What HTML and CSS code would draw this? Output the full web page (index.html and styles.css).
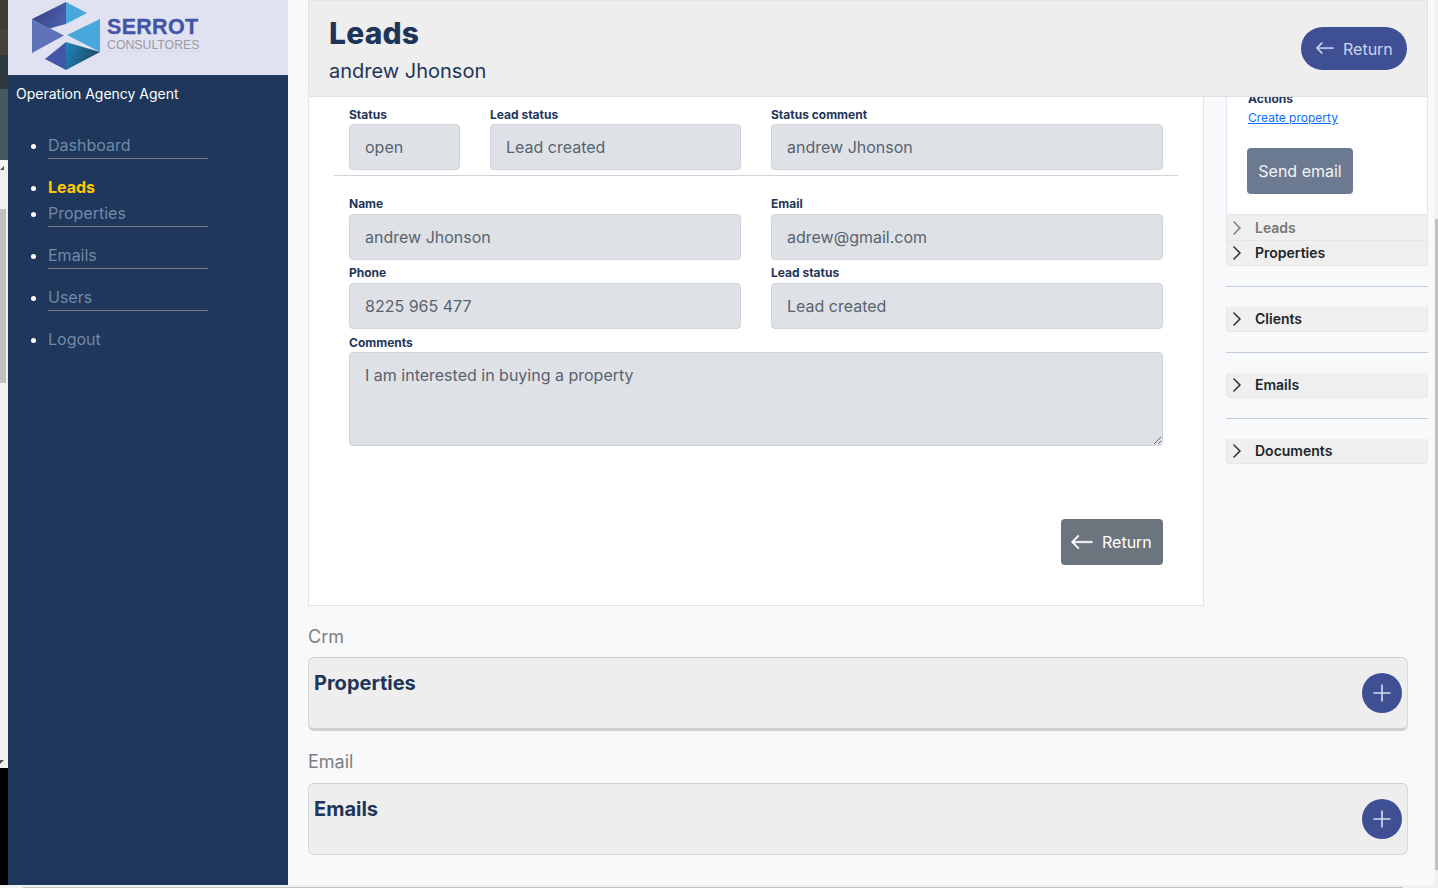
FILE: index.html
```html
<!DOCTYPE html>
<html lang="en">
<head>
<meta charset="utf-8">
<title>Leads</title>
<link rel="stylesheet" href="styles.css">
</head>
<body>
<svg class="defs" width="0" height="0" aria-hidden="true">
  <defs>
    <linearGradient id="gTop" x1="0" y1="0" x2="1" y2="0.4"><stop offset="0" stop-color="#2f3f7c"/><stop offset="1" stop-color="#4a5cab"/></linearGradient>
    <linearGradient id="gBot" x1="0" y1="0" x2="1" y2="0.4"><stop offset="0" stop-color="#1f87bd"/><stop offset="1" stop-color="#1d4a66"/></linearGradient>
    <symbol id="arrow" viewBox="0 0 16 16"><path fill="currentColor" stroke="currentColor" stroke-width=".35" fill-rule="evenodd" d="M15 8a.5.5 0 0 0-.5-.5H2.707l3.147-3.146a.5.5 0 1 0-.708-.708l-4 4a.5.5 0 0 0 0 .708l4 4a.5.5 0 0 0 .708-.708L2.707 8.5H14.5A.5.5 0 0 0 15 8z"/></symbol>
    <symbol id="chev" viewBox="0 0 16 16"><path fill="currentColor" stroke="currentColor" stroke-width=".6" fill-rule="evenodd" d="M4.646 1.646a.5.5 0 0 1 .708 0l6 6a.5.5 0 0 1 0 .708l-6 6a.5.5 0 0 1-.708-.708L10.293 8 4.646 2.354a.5.5 0 0 1 0-.708z"/></symbol>
    <symbol id="plus" viewBox="0 0 18 18"><path stroke="currentColor" stroke-width="1.6" stroke-linecap="round" d="M9 1v16M1 9h16"/></symbol>
  </defs>
</svg>
<div class="app">
  <div class="top">
    <div class="strip">
      <div class="s1"></div><div class="s2"></div><div class="s3"></div><div class="s4"></div>
      <div class="s5"><span class="tri-up"></span><span class="thumb"></span><span class="tri-down"></span></div>
      <div class="s6"></div>
    </div>
    <aside class="sidebar">
      <div class="brand">
        <svg class="mark" viewBox="0 0 72 70" width="72" height="70">
          <polygon points="35,0 35,22 17,27 1,17" fill="url(#gTop)"/>
          <polygon points="1,17 33,33.5 1,51" fill="#5f73b8"/>
          <polygon points="35,0 56,11 35,22" fill="#48a8dd"/>
          <polygon points="69,17 69,50 36,33" fill="#48a8dd"/>
          <polygon points="35,40 69,50 35,68" fill="url(#gBot)"/>
          <polygon points="35,40 35,68 14,57" fill="#4456a8"/>
        </svg>
        <div class="wordmark">
          <div class="wm1">SERROT</div>
          <div class="wm2">CONSULTORES</div>
        </div>
      </div>
      <div class="role">Operation Agency Agent</div>
      <ul class="nav">
        <li class="nav-item rule"><a>Dashboard</a></li>
        <li class="nav-item active"><a>Leads</a></li>
        <li class="nav-item rule"><a>Properties</a></li>
        <li class="nav-item rule"><a>Emails</a></li>
        <li class="nav-item rule"><a>Users</a></li>
        <li class="nav-item"><a>Logout</a></li>
      </ul>
    </aside>
    <main class="main">
      <header class="head">
        <div>
          <h1>Leads</h1>
          <p>andrew Jhonson</p>
        </div>
        <button class="pill"><svg width="20" height="20"><use href="#arrow"/></svg><span class="pill-text">Return</span></button>
      </header>
      <div class="columns">
        <section class="card">
          <div class="grid g3">
            <div><div class="lab">Status</div><div class="field">open</div></div>
            <div><div class="lab">Lead status</div><div class="field">Lead created</div></div>
            <div><div class="lab">Status comment</div><div class="field">andrew Jhonson</div></div>
          </div>
          <hr class="sep">
          <div class="grid g2 second">
            <div><div class="lab">Name</div><div class="field">andrew Jhonson</div></div>
            <div><div class="lab">Email</div><div class="field">adrew@gmail.com</div></div>
            <div><div class="lab">Phone</div><div class="field">8225 965 477</div></div>
            <div><div class="lab">Lead status</div><div class="field">Lead created</div></div>
          </div>
          <div class="comments">
            <div class="lab">Comments</div>
            <textarea class="area" readonly>I am interested in buying a property</textarea>
          </div>
          <div class="foot"><button class="back"><svg width="24" height="24"><use href="#arrow"/></svg>Return</button></div>
        </section>
        <aside class="side">
          <div class="actions">
            <div class="act-title">Actions</div>
            <a class="act-link">Create property</a>
            <button class="send">Send email</button>
          </div>
          <div class="acc">
            <div class="acc-row muted"><svg width="16" height="16"><use href="#chev"/></svg>Leads</div>
            <div class="acc-row"><svg width="16" height="16"><use href="#chev"/></svg>Properties</div>
          </div>
          <hr class="line">
          <div class="acc"><div class="acc-row"><svg width="16" height="16"><use href="#chev"/></svg>Clients</div></div>
          <hr class="line">
          <div class="acc"><div class="acc-row"><svg width="16" height="16"><use href="#chev"/></svg>Emails</div></div>
          <hr class="line">
          <div class="acc"><div class="acc-row"><svg width="16" height="16"><use href="#chev"/></svg>Documents</div></div>
        </aside>
      </div>
      <div class="group">Crm</div>
      <section class="panel thick">
        <h2>Properties</h2>
        <button class="add"><svg width="18" height="18"><use href="#plus"/></svg></button>
      </section>
      <div class="group second-group">Email</div>
      <section class="panel">
        <h2>Emails</h2>
        <button class="add"><svg width="18" height="18"><use href="#plus"/></svg></button>
      </section>
    </main>
    <div class="vbar"><span class="vthumb"></span></div>
  </div>
  <div class="hbar"><span class="hthumb"></span></div>
</div>
</body>
</html>
```
FILE: styles.css
```css
* { box-sizing: border-box; }
html, body { margin: 0; padding: 0; height: 100%; overflow: hidden; }
body { font-family: Inter, "Liberation Sans", sans-serif; background: #f8f9fb; color: #1e3559; }
.defs { display: block; height: 0; }
.app { width: 1438px; height: 888px; display: flex; flex-direction: column; overflow: hidden; }
.top { flex: 0 0 885px; display: flex; min-height: 0; }

.strip { flex: 0 0 8px; display: flex; flex-direction: column; }
.s1 { height: 29px; background: #3e3b37; }
.s2 { height: 26px; background: #45423d; }
.s3 { height: 34px; background: #2f3a40; }
.s4 { height: 71px; background: #48575d; }
.s5 { height: 608px; background: #f1f1f1; display: flex; flex-direction: column; }
.s6 { flex: 1; background: #000; }
.tri-up { display: block; width: 0; height: 0; margin-top: 6px; border-left: 4px solid transparent; border-right: 0; border-bottom: 4px solid #505050; }
.thumb { display: block; width: 6px; height: 174px; margin-top: 39px; background: #c1c1c1; }
.tri-down { display: block; width: 0; height: 0; margin-top: 377px; border-left: 4px solid #505050; border-bottom: 4px solid transparent; }

.sidebar { flex: 0 0 280px; background: #1e375b; display: flex; flex-direction: column; }
.brand { height: 75px; background: #e0e2f1; display: flex; padding: 2px 0 0 23px; gap: 4px; }
.mark { flex: none; }
.wordmark { padding-top: 14px; width: 98px; height: 50px; border-bottom: 1px solid #d9dbea; }
.wm1 { font: 700 21.5px/23px "Liberation Sans", sans-serif; color: #4255a6; letter-spacing: .3px; -webkit-text-stroke: .3px #4255a6; }
.wm2 { font: 400 12.3px/14px "Liberation Sans", sans-serif; color: #9b9ba6; margin-top: -1px; }
.role { font-size: 14px; line-height: 20px; color: #fff; padding: 9px 0 0 8px; }
.nav { list-style: disc; margin: 0; padding: 29px 0 0 40px; color: #fff; }
.nav-item { width: 160px; height: 26px; font-size: 16px; line-height: 24px; }
.nav-item a { display: block; height: 26px; color: #7389a8; }
.nav-item.rule { margin-bottom: 16px; }
.nav-item.rule a { border-bottom: 1px solid #7a7d80; }
.nav-item.active a { color: #ffc800; font-weight: 700; }

.main { flex: 1; min-width: 0; padding-left: 20px; background: #f8f9fb; }
.head { position: relative; z-index: 2; width: 1120px; height: 97px; padding: 0 20px 0 20px; background: #eee; border: 1px solid #dee2e6; border-top-color: #e2e4e8; border-radius: 0 0 3px 3px; display: flex; justify-content: space-between; align-items: center; }
.head h1 { margin: 0; font-size: 30px; line-height: 36px; font-weight: 800; letter-spacing: .2px; color: #1e3559; padding-top: 0; }
.head p { margin: 8px 0 0; font-size: 20px; line-height: 24px; color: #1e3559; }
.pill { width: 106px; height: 43px; margin-top: -1px; border: 0; border-radius: 22px; background: #3f4f94; color: #cbd4ee; font: 400 16px Inter, sans-serif; display: flex; align-items: center; gap: 8px; padding: 0 0 0 14px; }
.pill-text { padding-top: 2px; }

.columns { display: flex; align-items: flex-start; gap: 22px; }
.card { width: 896px; height: 509px; background: #fff; border: 1px solid #e2e4e8; border-top: 0; padding: 11px 25px 0; }
.grid { display: grid; column-gap: 30px; padding: 0 15px; }
.g3 { grid-template-columns: 111px 251px 392px; }
.g2 { grid-template-columns: 392px 392px; row-gap: 6px; }
.lab { font-size: 12px; line-height: 14px; height: 16px; font-weight: 700; color: #1e3559; }
.g2 .lab { height: 17px; }
.field { height: 46px; padding: 0 15px; background: #dee1e6; border: 1px solid #cfd4da; border-radius: 4px; font-size: 16px; line-height: 44px; color: #59636f; }
.sep { margin: 5px 0 0; border: 0; border-top: 1px solid #cfd2d8; }
.second { margin-top: 21px; }
.comments { padding: 7px 15px 0; }
.area { display: block; width: 100%; height: 94px; padding: 10px 15px; background: #dee1e6; border: 1px solid #cfd4da; border-radius: 4px; font: 400 16px/24px Inter, sans-serif; color: #59636f; outline: 0; }
.foot { display: flex; justify-content: flex-end; padding: 73px 15px 0; }
.back { width: 102px; height: 46px; border: 0; border-radius: 4px; background: #6c757d; color: #fff; font: 400 16px Inter, sans-serif; display: flex; align-items: center; gap: 8px; padding: 0 0 0 9px; }

.side { width: 202px; margin-top: -20px; }
.actions { position: relative; height: 138px; background: #fff; border: 1px solid #e2e6ee; padding: 14px 20px 0 21px; }
.act-title { font-size: 12px; line-height: 14px; font-weight: 700; color: #1e3559; }
.act-link { display: block; margin-top: 5px; font-size: 12px; line-height: 14px; color: #0d6efd; text-decoration: underline; }
.send { display: block; width: 106px; height: 46px; margin: 23px 0 0 -1px; border: 0; border-radius: 4px; background: #6c7a91; color: #f2f3f5; font: 400 16px Inter, sans-serif; }
.acc { background: #efefef; border-radius: 0 0 4px 4px; border: 1px solid #e6e7ea; border-top: 0; }
.acc-row { height: 24px; display: flex; align-items: center; gap: 10px; padding: 0 0 2px 2px; font-size: 14px; font-weight: 600; color: #212529; }
.acc-row svg { margin-top: 2px; }
.acc-row + .acc-row { border-top: 1px solid #e4e5e8; height: 25px; }
.acc-row.muted { height: 25px; padding-bottom: 0; color: #777; }
.acc-row.muted svg { margin-top: 0; }
.line { margin: 20px 0; border: 0; border-top: 1px solid #c3cbdc; }

.group { margin-top: 19px; height: 24px; font-size: 18px; line-height: 24px; color: #7d7f82; }
.second-group { margin-top: 19px; height: 25px; }
.panel { position: relative; width: 1100px; height: 72px; margin-top: 8px; padding: 13px 5px 0; background: #eee; border: 1px solid #d9d9d9; border-top: 1px solid #cfcfcf; border-radius: 6px; display: flex; justify-content: space-between; }
.panel.thick { height: 74px; border-bottom: 3px solid #cfcfcf; margin-top: 8px; }
.panel h2 { margin: 0; font-size: 20px; line-height: 24px; font-weight: 700; color: #1e3559; }
.add { width: 40px; height: 40px; margin-top: 2px; border: 0; border-radius: 50%; background: #3f4f94; color: #d7dbef; display: flex; align-items: center; justify-content: center; padding: 0; }

.vbar { flex: 0 0 4px; background: #f1f1f1; display: flex; justify-content: flex-end; }
.vthumb { display: block; width: 3px; height: 651px; margin-top: 219px; background: #c1c1c1; }
.hbar { flex: 0 0 3px; background: #f1f1f1; }
.hthumb { display: block; width: 1380px; height: 1px; margin: 2px 0 0 23px; background: #c1c1c1; }
```
